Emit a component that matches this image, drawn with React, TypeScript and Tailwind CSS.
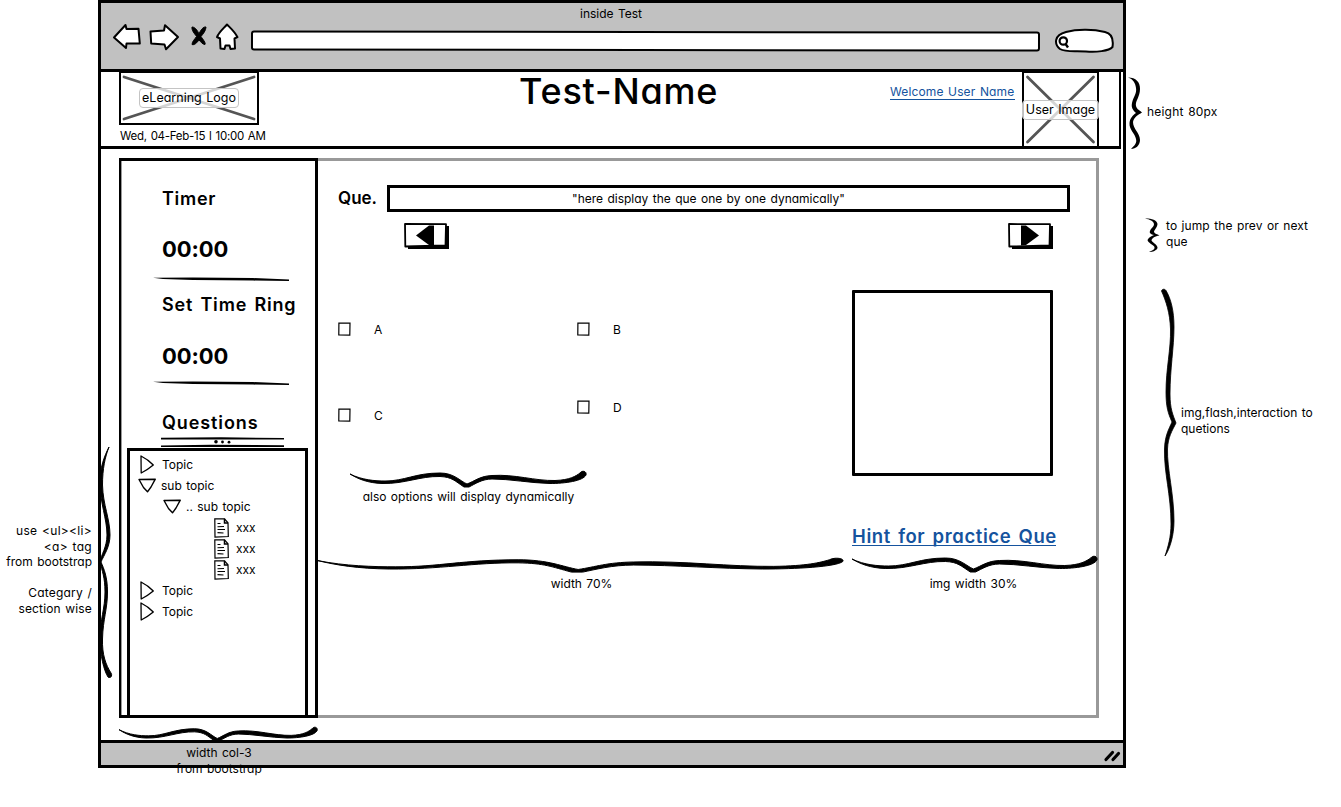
import type { ReactNode } from "react";

const H_BRACE =
  "M0 3C12 9 25 10 35 10C55 10 65 2 90 2C104 2 110 10 117 13C125 10 130 5 142 4.5C165 3 185 10 205 9.5C220 9 226 5 230 2C232 -1 237 0 236 4C233 10 215 12.5 200 12.5C180 12 160 8 142 8C132 8 125 13 119 16L114 16C105 10 102 6 90 5.5C70 5 55 13 32 12.5C18 12 8 8 0 3Z";

function Brace({ className }: { className: string }) {
  return (
    <svg viewBox="0 0 237 17" preserveAspectRatio="none" className={"block shrink-0 overflow-visible " + className}>
      <path d={H_BRACE} stroke="#000" strokeWidth="1" vectorEffect="non-scaling-stroke" />
    </svg>
  );
}

function Rule({ className }: { className: string }) {
  return (
    <svg viewBox="0 0 136 6" className={"block h-[6px] w-[136px] shrink-0 " + className}>
      <path d="M0 1.800L40 1.400L100 2L136 3.600V5L100 4.600L40 4L10 3Z" />
    </svg>
  );
}

function Placeholder({ w, h, label, className, labelClass }: { w: number; h: number; label: string; className: string; labelClass: string }) {
  return (
    <div className={"relative flex shrink-0 items-center justify-center border-2 border-black bg-white " + className}>
      <svg viewBox={`0 0 ${w} ${h}`} className="absolute inset-0 h-full w-full" stroke="#555" strokeWidth="2.8" strokeLinecap="round">
        <path d={`M3 4L${w - 3} ${h - 4}M${w - 3} 4L3 ${h - 4}`} />
      </svg>
      <span className={"relative rounded-[4px] border border-[#c4c4c4] bg-white/75 text-center whitespace-nowrap " + labelClass}>{label}</span>
    </div>
  );
}

function TriRight() {
  return (
    <svg viewBox="0 0 18 19" className="h-[19px] w-[18px]" fill="none" stroke="#000" strokeWidth="1.3" strokeLinejoin="round">
      <path d="M3 1C8 3.500 12 6.500 15.300 10C11.500 13.200 8 15.500 3.200 18Z" />
    </svg>
  );
}

function TriDown() {
  return (
    <svg viewBox="0 0 18 19" className="h-[19px] w-[18px]" fill="none" stroke="#000" strokeWidth="1.4" strokeLinejoin="round">
      <path d="M1 3.500L17.300 3.200L13 11L9.500 15.800L5.500 11.500Z" />
    </svg>
  );
}

function Doc() {
  return (
    <svg viewBox="0 0 15 20" className="h-[20px] w-[15px]" fill="none" stroke="#000" strokeWidth="1.2">
      <path d="M.8.8L10.500.800L14 4.800L14.300 18.500L1 19.200Z" />
      <path d="M10.500.800V5H14" strokeWidth="1.500" />
      <path d="M3.500 5.500H6.500M3.500 8.800L10 8.500M3.500 11.500H11M3.500 14.600L9.500 15" strokeWidth="1.1" />
    </svg>
  );
}

function Row({ icon, pad, gap, children }: { icon: ReactNode; pad: string; gap: string; children: ReactNode }) {
  return (
    <li className={"flex h-[21px] items-center " + pad + " " + gap}>
      {icon}
      <span className="pt-px whitespace-nowrap">{children}</span>
    </li>
  );
}

function Option({ label }: { label: string }) {
  return (
    <label className="flex h-[16px] items-center gap-[23px]">
      <svg viewBox="0 0 13 14" className="h-[14px] w-[13px]" fill="none" stroke="#000" strokeWidth="1.2">
        <path d="M.9 1.200L12 1L11.800 13.100L.8 12.800Z" />
      </svg>
      <span className="pt-px">{label}</span>
    </label>
  );
}

function NavButton({ d }: { d: string }) {
  return (
    <svg viewBox="0 0 46 27" className="block h-[27px] w-[46px]">
      <path d="M4 3H45V26H4Z" />
      <path d="M1 1L42 1.200L41.500 22.500L1.300 23.500Z" fill="#fff" stroke="#000" strokeWidth="1.800" strokeLinejoin="round" />
      <path d={d} />
    </svg>
  );
}

function Toolbar() {
  return (
    <div className="flex h-[69px] shrink-0 flex-col border-b-[3px] border-black bg-[#c1c1c1]">
      <div className="h-[18px] pt-[3px] pr-[2px] text-center">inside Test</div>
      <div className="flex h-[30px] items-start pl-[11px] pt-[1px]">
        <svg viewBox="0 0 130 30" className="h-[30px] w-[130px] shrink-0" fill="#fff" stroke="#000" strokeWidth="2" strokeLinejoin="round">
          <path d="M2 15.500L13.500 3L14.500 7L26.500 6.800L27.800 21.500L14.500 21.500L14 26Z" />
          <path d="M38.500 9.500L52 8.500L53 3.200L66 15L54 27.200L52.500 22.500L39.200 21.500Z" />
          <path d="M80 5C83.500 5 85.500 9 87 11.500C89 8 91 4.500 94 5C94 8.500 91 12 89 14.500C91 17.500 94 21 93 22.500C90.500 22.500 88.500 19.500 87 18C85 20.500 82.500 23.500 80 22.500C80 19.500 83 17 84.500 14.500C82.500 11.500 79.500 8.500 80 5Z" fill="#000" strokeWidth="1" />
          <path d="M115 2.500C119 6.500 123 10 125.500 15.200L122.500 16.500L123 26.500L118.500 27L117.500 23.500L113.500 23.500L112.500 27L108.500 26.500L108 16.500L105 15C107 10 111 7 115 2.500Z" />
        </svg>
        <div className="mt-[9px] ml-[9px] h-[20px] w-[789px] shrink-0 rotate-[0.08deg] rounded-[3px] border-2 border-black bg-white" />
        <svg viewBox="0 0 60 26" className="mt-[6px] ml-[14px] h-[26px] w-[60px] shrink-0" fill="#fff" stroke="#000" strokeWidth="2">
          <path d="M12 4C24 .800 40 1.500 51 4C58 5.500 59.500 12 58.500 19C55 23 42 24.500 32 23.500C22 22.500 12 24.500 6 21C0 16 0 7 12 4Z" />
          <circle cx="9.300" cy="13" r="3.700" fill="none" strokeWidth="2.200" />
          <path d="M11.500 15.800L14 19.500" strokeWidth="2.400" />
        </svg>
      </div>
    </div>
  );
}

function Header() {
  return (
    <header className="flex h-[77px] w-[1020px] shrink-0 items-start border-r-2 border-b-[3px] border-black pl-[18px]">
      <div className="-mt-px w-[400px] shrink-0">
        <Placeholder w={136} h={50} label="eLearning Logo" className="h-[54px] w-[140px]" labelClass="h-[20px] w-[100px] leading-[18px] text-[12.5px]" />
        <div className="mt-[3px] ml-px h-[16px] text-[11.5px] whitespace-nowrap tracking-[-0.28px]">Wed, 04-Feb-15 l 10:00 AM</div>
      </div>
      <h1 className="h-[36px] w-[200px] text-[36px] leading-[39px] font-medium tracking-[0.8px] whitespace-nowrap">Test-Name</h1>
      <a className="mt-[11px] ml-[171px] h-[17px] w-[125px] border-b border-[#15539e] leading-[17px] whitespace-nowrap tracking-[0.13px] text-[#15539e]">Welcome User Name</a>
      <Placeholder w={72} h={73} label="User Image" className="-mt-px ml-[7px] h-[77px] w-[77px]" labelClass="h-[20px] w-[77px] -mx-1 leading-[17px] text-[12.5px]" />
    </header>
  );
}

function Sidebar() {
  return (
    <aside className="-mt-[3px] -ml-[3px] flex h-[560px] w-[199px] shrink-0 flex-col border-y-[3px] border-r-[3px] border-l-2 border-black text-[18px] font-semibold [word-spacing:2px]">
      <h2 className="mt-[28px] ml-[41px] h-[20px] leading-[20px] tracking-[0.7px]">Timer</h2>
      <div className="mt-[28px] ml-[41px] h-[24px] text-[22px] leading-[24px] font-bold tracking-[-0.1px]">00:00</div>
      <Rule className="mt-[15px] ml-[32px]" />
      <h2 className="mt-[13px] ml-[41px] h-[20px] leading-[20px] tracking-[0.8px] whitespace-nowrap">Set Time Ring</h2>
      <div className="mt-[29px] ml-[41px] h-[24px] text-[22px] leading-[24px] font-bold tracking-[-0.1px]">00:00</div>
      <Rule className="mt-[12px] ml-[32px]" />
      <h2 className="mt-[27px] ml-[41px] h-[20px] leading-[20px] tracking-[0.9px]">Questions</h2>
      <svg viewBox="0 0 123 11" className="mt-[4px] ml-[40px] block h-[11px] w-[123px] shrink-0">
        <path d="M0 .800L60 .300L123 1V2.600H0ZM0 8.500L50 7.800L123 8.300V10H0Z" />
        <circle cx="55" cy="4.800" r="1.800" />
        <circle cx="61.500" cy="5" r="1.400" />
        <circle cx="68" cy="5.200" r="1.400" />
      </svg>
      <ul className="ml-[6px] w-[181px] flex-1 border-x-[3px] border-t-[3px] border-black pt-[3px] text-[12px] font-normal [word-spacing:1px]">
        <Row icon={<TriRight />} pad="pl-[8px]" gap="gap-[6px]">Topic</Row>
        <Row icon={<TriDown />} pad="pl-[8px]" gap="gap-[5px]">sub topic</Row>
        <Row icon={<TriDown />} pad="pl-[33px]" gap="gap-[5px]">.. sub topic</Row>
        <Row icon={<Doc />} pad="pl-[84px]" gap="gap-[7px]">xxx</Row>
        <Row icon={<Doc />} pad="pl-[84px]" gap="gap-[7px]">xxx</Row>
        <Row icon={<Doc />} pad="pl-[84px]" gap="gap-[7px]">xxx</Row>
        <Row icon={<TriRight />} pad="pl-[8px]" gap="gap-[6px]">Topic</Row>
        <Row icon={<TriRight />} pad="pl-[8px]" gap="gap-[6px]">Topic</Row>
      </ul>
    </aside>
  );
}

function Content() {
  return (
    <section className="flex w-[778px] shrink-0 flex-col">
      <div className="flex pt-[24px] pl-[20px]">
        <span className="w-[49px] shrink-0 text-[17px] leading-[27px] font-semibold">Que.</span>
        <div className="h-[27px] w-[683px] shrink-0 border-[3px] border-black pr-[40px] text-center leading-[21px]">
          "here display the que one by one dynamically"
        </div>
      </div>
      <div className="mt-[11px] flex h-[25px] justify-between pr-[42px] pl-[86px]">
        <NavButton d="M12 12.500L25 2.500H30V22.500L25 22Z" />
        <NavButton d="M31 12.500L18 2.500H13V22.500L18 22Z" />
      </div>
      <div className="flex">
        <div className="w-[534px] shrink-0">
          <div className="flex h-[102px] pt-[73px] pl-[20px]">
            <div className="flex w-[239px] shrink-0 flex-col gap-[70px]">
              <Option label="A" />
              <Option label="C" />
            </div>
            <div className="flex flex-col gap-[62px]">
              <Option label="B" />
              <Option label="D" />
            </div>
          </div>
          <div className="mt-[121px] ml-[32px] w-[237px]">
            <Brace className="h-[17px] w-[237px]" />
            <p className="h-[16px] text-center leading-[17px] whitespace-nowrap">also options will display dynamically</p>
          </div>
          <Brace className="mt-[54px] h-[15px] w-[527px]" />
          <p className="mt-[2px] h-[16px] w-[527px] text-center leading-[18px]">width 70%</p>
        </div>
        <div className="w-[246px] shrink-0">
          <div className="mt-[42px] h-[186px] w-[201px] rounded-[1px] border-[3px] border-black" />
          <a className="mt-[49px] block h-[21px] w-[204px] border-b border-[#15539e] text-[18.5px] leading-[22px] font-semibold tracking-[0.6px] whitespace-nowrap text-[#15539e] [word-spacing:2px]">
            Hint for practice Que
          </a>
          <Brace className="mt-[10px] h-[17px] w-[246px]" />
          <p className="mt-[2px] h-[16px] w-[243px] text-center leading-[17px]">img width 30%</p>
        </div>
      </div>
    </section>
  );
}

export default function App() {
  return (
    <div className="relative flex h-[807px] w-[1341px] overflow-hidden bg-white font-['Inter','Liberation_Sans',sans-serif] text-[12px] leading-[16px] text-black [font-feature-settings:'cv11'] [word-spacing:1px]">
      <aside className="w-[98px] shrink-0 pt-[523px] pr-[6px] text-right whitespace-nowrap">
        <p className="tracking-[0.3px]">use &lt;ul&gt;&lt;li&gt;</p>
        <p className="tracking-[0.3px]">&lt;a&gt; tag</p>
        <p className="-mt-px">from bootstrap</p>
        <p className="mt-[15px] tracking-[0.2px]">Categary /</p>
        <p className="tracking-[0.15px]">section wise</p>
      </aside>

      <main className="flex h-[768px] w-[1028px] shrink-0 flex-col border-[3px] border-black">
        <Toolbar />
        <Header />
        <div className="h-[591px] shrink-0 pt-[9px] pl-[18px]">
          <div className="flex h-[560px] w-[980px] border-[3px] border-[#999]">
            <Sidebar />
            <Content />
          </div>
          <Brace className="mt-[9px] h-[15px] w-[199px]" />
        </div>
        <footer className="relative flex flex-1 border-t-[3px] border-black bg-[#c1c1c1]">
          <div className="mt-[2px] ml-[18px] h-0 w-[200px] text-center">
            <p>width col-3</p>
            <p>from bootstrap</p>
          </div>
          <svg viewBox="0 0 20 16" className="mt-[4px] ml-auto h-[16px] w-[20px]" stroke="#000" strokeWidth="3.200" strokeLinecap="round">
            <path d="M3 12.500L9.500 5.500M10 12.500L15.500 6.500" />
          </svg>
        </footer>
      </main>

      <aside className="w-[215px] shrink-0 whitespace-nowrap">
        <div className="mt-[77px] flex h-[73px] items-start">
          <svg viewBox="0 0 15 73" className="ml-[2px] h-[73px] w-[15px] shrink-0">
            <path d="M0 .5C8 .5 12 5 12 12C12 20 7 24 8 29C9 33 12 33 14 35.500C10 38 6 40 5 45C5 52 12 56 12 63C12 68 8 72 3 72C7 68 9 66 8 62C7 56 1 53 1.500 46C2 41 5 38 8 36C5 33 3 31 4 26C5 20 9 17 8 11C7.500 6 5 2 0 .5Z" />
          </svg>
          <p className="mt-[27px] ml-[4px] tracking-[0.2px]">height 80px</p>
        </div>
        <div className="mt-[67px] flex h-[36px] items-start">
          <svg viewBox="0 0 15 35" className="mt-px ml-[19px] h-[35px] w-[15px] shrink-0">
            <path d="M0 .5C6 .3 12 2 12.500 6C12 10 9 12 9 14C10 16 12 16 14.500 17.500C10 18 7 20 6.500 22.500C8 25 13 27 12.500 30C11.500 32.500 8 34 4 34C8 32.500 10 31 9.500 29C8 26.500 3 25 2.500 22C4 19 7 18 9 17C6 16.500 4 15 5 13C6 10 9 9 9 6C8.500 3 5 1.500 0 .5Z" />
          </svg>
          <p className="mt-px ml-[6px] tracking-[0.08px]">
            to jump the prev or next
            <br />
            que
          </p>
        </div>
        <div className="mt-[36px] flex h-[268px] items-start">
          <svg viewBox="0 0 16 267" className="ml-[35px] h-[267px] w-[16px] shrink-0 overflow-visible" stroke="#000" strokeWidth="0.8">
            <path d="M.5 2C1 0 3.500 -.5 5 1.500C10 10 13 22 13 38C13 58 9 80 9 105C9 120 12 126 15 134C11 142 7 148 6.500 160C6 180 13 205 13 232C13 246 9 260 4 267C7 258 10 248 10 235C10 205 3 185 3.500 160C4 146 8 140 11 133C7 124 5 118 5 103C5 80 10 60 9.500 40C9 24 5 12 .5 2Z" />
          </svg>
          <p className="mt-[116px] ml-[4px]">
            img,flash,interaction to
            <br />
            quetions
          </p>
        </div>
      </aside>

      <svg viewBox="0 0 13 231" className="absolute top-[447px] left-[100px] h-[231px] w-[13px]" stroke="#000" strokeWidth="1">
        <path d="M9 0C4 10 0 20 0 36C0 56 7 72 7 88C7 100 1 108 0 115C2 124 5 130 5 145C5 162 0 172 0 192C0 208 4 224 8 230C10 232 13 229 11 226C6 218 2 208 2.500 192C3 172 7.500 162 7.500 145C7.500 130 4 122 1 115C4 108 10 100 10 88C10 72 3 58 2.500 38C2.500 22 5 10 9 0Z" />
      </svg>
    </div>
  );
}
